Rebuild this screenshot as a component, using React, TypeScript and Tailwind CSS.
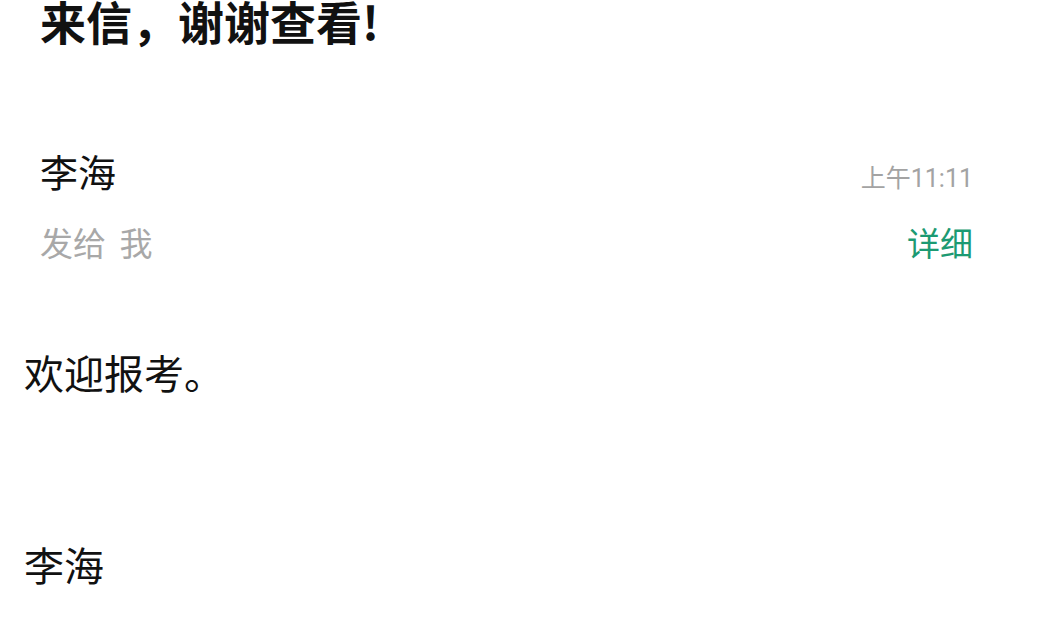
export default function App() {
  return (
    <div
      className="w-[1047px] h-[640px] overflow-hidden bg-white text-black"
      style={{ fontFamily: '"Noto Sans CJK SC", "Noto Sans", sans-serif' }}
    >
      <h1 className="pl-[40px] text-[46px] leading-[40px] font-bold text-[#111] whitespace-nowrap">来信，谢谢查看!</h1>

      <div className="mt-[108px] pl-[40px] pr-[74px]">
        <div className="flex items-baseline justify-between h-[48px]">
          <span className="text-[38px] leading-[46px] text-[#111]">李海</span>
          <span className="text-[25px] leading-[48px] text-[#a3a3a3]" style={{ fontFamily: 'Roboto, "Noto Sans CJK SC", sans-serif' }}>
            上午11:11
          </span>
        </div>
        <div className="mt-[22px] flex items-center justify-between h-[48px]">
          <span className="text-[33px] leading-[48px] text-[#a8a8a8] [word-spacing:6px]">发给 我</span>
          <span className="text-[33px] leading-[48px] text-[#1c9a72]">详细</span>
        </div>
      </div>

      <div className="mt-[78px] pl-[24px]">
        <p className="text-[40px] leading-[56px] text-[#111]">欢迎报考。</p>
        <p className="mt-[136px] text-[40px] leading-[56px] text-[#111]">李海</p>
      </div>
    </div>
  )
}
